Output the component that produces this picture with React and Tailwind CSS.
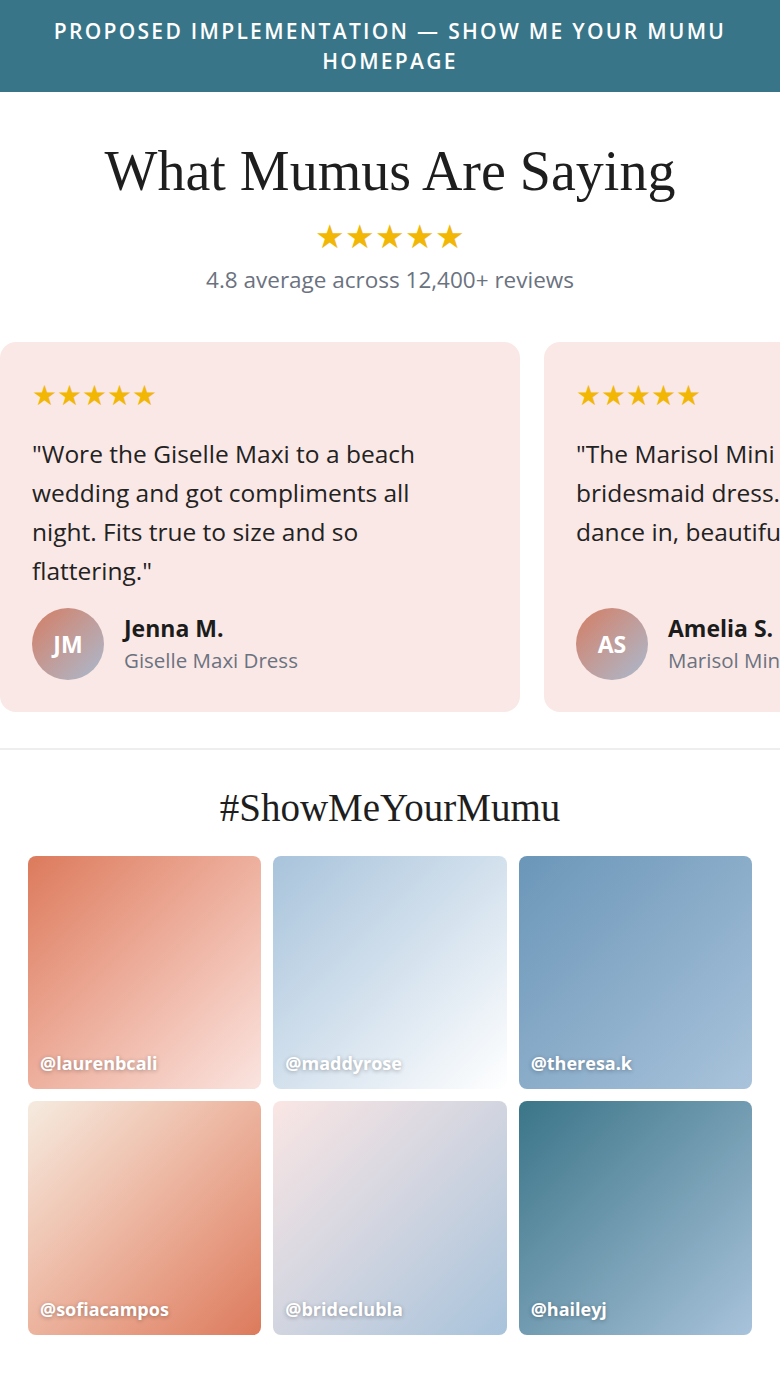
import React from 'react';

const reviews = [
  {
    quote: '"Wore the Giselle Maxi to a beach wedding and got compliments all night. Fits true to size and so flattering."',
    name: 'Jenna M.',
    initials: 'JM',
    product: 'Giselle Maxi Dress',
  },
  {
    quote: '"The Marisol Mini was the perfect bridesmaid dress. Comfortable to dance in, beautiful in photos."',
    name: 'Amelia S.',
    initials: 'AS',
    product: 'Marisol Mini Dress',
  },
];

const tiles = [
  { handle: '@laurenbcali', bg: 'bg-linear-to-br from-[#dc7a5c] to-[#fae4e0]' },
  { handle: '@maddyrose', bg: 'bg-linear-to-br from-[#a8c3db] to-[#ffffff]' },
  { handle: '@theresa.k', bg: 'bg-linear-to-br from-[#6b96b8] to-[#a9c3db]' },
  { handle: '@sofiacampos', bg: 'bg-linear-to-br from-[#f5ebe0] to-[#dc7a5c]' },
  { handle: '@brideclubla', bg: 'bg-linear-to-br from-[#fae6e4] to-[#a8c3db]' },
  { handle: '@haileyj', bg: 'bg-linear-to-br from-[#3a7588] to-[#a8c3db]' },
];

function Stars({ className }) {
  return <div className={`text-[#f2b705] ${className}`}>★★★★★</div>;
}

function ReviewCard({ review }) {
  return (
    <div className="w-[520px] shrink-0 bg-[#fae8e6] rounded-2xl p-8 flex flex-col">
      <Stars className="text-[28px] leading-[40px] whitespace-nowrap" />
      <p className="mt-5 text-[24.5px] leading-[39px] text-[#222] pr-4">{review.quote}</p>
      <div className="mt-auto pt-[18px] flex items-center gap-5">
        <div className="w-[72px] h-[72px] shrink-0 rounded-full bg-linear-to-br from-[#d27c62] to-[#a7b9cf] flex items-center justify-center text-white font-bold text-[23px]">
          {review.initials}
        </div>
        <div className="whitespace-nowrap">
          <div className="text-[23px] font-bold text-[#1c1c1c] leading-[32px]">{review.name}</div>
          <div className="text-[20.5px] text-[#6b7280] leading-[32px]">{review.product}</div>
        </div>
      </div>
    </div>
  );
}

export default function App() {
  return (
    <div className="bg-white min-h-[1386px] font-['Open_Sans','Noto_Sans',sans-serif]">
      <div className="bg-[#387588] text-white text-center font-semibold uppercase text-[21px] leading-[30px] tracking-[2.3px] px-12 pt-[16px] pb-[16px]">
        Proposed Implementation — Show Me Your Mumu Homepage
      </div>

      <section className="pt-[44px] pb-9 border-b-2 border-[#eeeeee]">
        <h2 className="text-center font-['Liberation_Serif',serif] text-[56px] leading-[70px] text-[#1e1e1e]">
          What Mumus Are Saying
        </h2>
        <Stars className="text-center text-[33px] leading-[40px] mt-[10px]" />
        <p className="text-center text-[22.5px] text-[#6b7280] mt-[8px] leading-[32px]">
          4.8 average across 12,400+ reviews
        </p>
        <div className="mt-[46px] flex gap-6 overflow-hidden">
          {reviews.map((r) => (
            <ReviewCard key={r.name} review={r} />
          ))}
        </div>
      </section>

      <section className="px-7 pt-[34px]">
        <h3 className="text-center font-['Liberation_Serif',serif] text-[39px] leading-[48px] text-[#1e1e1e]">
          #ShowMeYourMumu
        </h3>
        <div className="mt-[24px] grid grid-cols-3 gap-3">
          {tiles.map((t) => (
            <div key={t.handle} className={`aspect-square rounded-lg ${t.bg} flex items-end px-3 pb-[12px]`}>
              <span className="text-white font-bold text-[18px] leading-[28px] [text-shadow:0_1px_4px_rgba(0,0,0,0.3)]">
                {t.handle}
              </span>
            </div>
          ))}
        </div>
      </section>
    </div>
  );
}
